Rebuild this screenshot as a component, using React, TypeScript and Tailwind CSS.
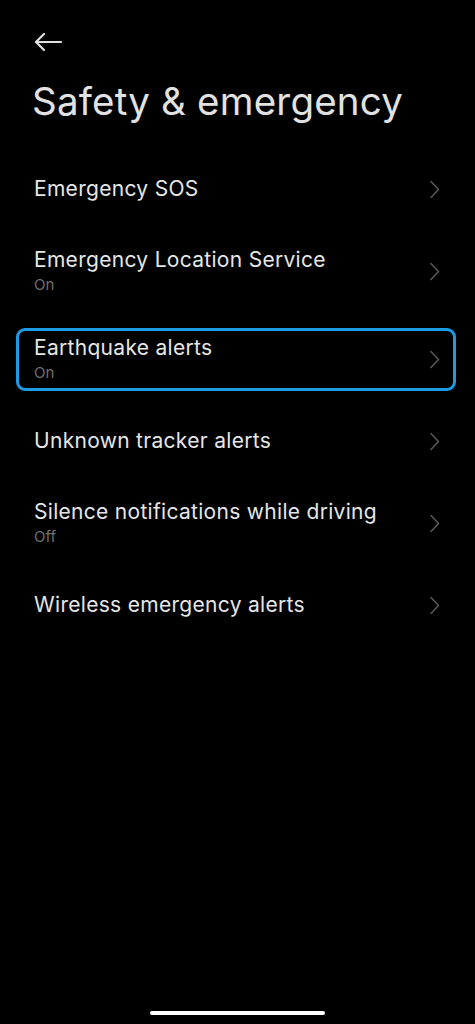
type Item = { title: string; sub?: string; focused?: boolean };

const ITEMS: Item[] = [
  { title: "Emergency SOS" },
  { title: "Emergency Location Service", sub: "On" },
  { title: "Earthquake alerts", sub: "On", focused: true },
  { title: "Unknown tracker alerts" },
  { title: "Silence notifications while driving", sub: "Off" },
  { title: "Wireless emergency alerts" },
];

function Chevron() {
  return (
    <svg width="11" height="19" viewBox="0 0 11 19" fill="none" stroke="#595959" strokeWidth="1.6" strokeLinecap="round" strokeLinejoin="round">
      <path d="M2 1.5L9.5 9.5L2 17.5" />
    </svg>
  );
}

function Row({ item }: { item: Item }) {
  return (
    <div className={`flex items-center ${item.sub ? "h-[88px]" : "h-[76px]"}`}>
      <div
        className={`ml-4 mr-[19px] h-[63px] flex-1 flex items-center rounded-[9px] border-[3px] pl-[15px] pr-[13px] ${
          item.focused ? "border-[#1a9be3]" : "border-transparent"
        }`}
      >
        <div className="flex-1 min-w-0">
          <div className="text-[21px] leading-[26px] text-[#e6e6e6] tracking-[0.3px]">{item.title}</div>
          {item.sub && <div className="mt-[2px] text-[15px] leading-[20px] text-[#6f6f6f]">{item.sub}</div>}
        </div>
        <Chevron />
      </div>
    </div>
  );
}

export default function App() {
  return (
    <div className="h-[1024px] w-full bg-black flex flex-col overflow-hidden" style={{ fontFamily: "Inter, 'Noto Sans', sans-serif" }}>
      {/* back arrow */}
      <div className="pt-[31px] pl-[33px] h-[56px]">
        <svg width="30" height="22" viewBox="0 0 30 22" fill="none" stroke="#e0e0e0" strokeWidth="2.2" strokeLinecap="round" strokeLinejoin="round">
          <path d="M3 11H28" />
          <path d="M11 3L3 11L11 19" />
        </svg>
      </div>

      <h1 className="pl-[32px] mt-[22px] text-[38.5px] leading-[46px] text-[#e2e2e2] font-normal tracking-[0.2px]">
        Safety &amp; emergency
      </h1>

      <div className="mt-[27px]">
        {ITEMS.map((it) => (
          <Row key={it.title} item={it} />
        ))}
      </div>

      {/* home indicator */}
      <div className="mt-auto mb-[9px] mx-auto h-[4px] w-[175px] rounded-full bg-white" />
    </div>
  );
}
